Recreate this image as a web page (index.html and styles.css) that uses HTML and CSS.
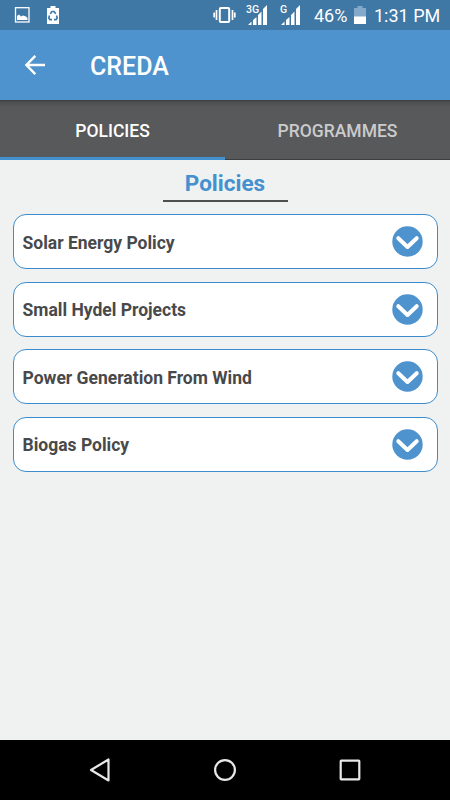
FILE: index.html
```
<!DOCTYPE html>
<html>

<head>
    <meta charset="utf-8">
    <title>CREDA - Policies</title>
    <link rel="stylesheet" href="styles.css">
    <meta name="viewport" content="width=device-width, initial-scale=1">
</head>

<body>
    <div class="status-bar">
        <svg class="icon-picture" width="16" height="30" viewBox="0 0 16 30">
            <rect x="1.500" y="7.700" width="13.500" height="14.300" fill="none" stroke="#fff" stroke-width="1.300"/>
            <path d="M3 20v-4l2-1.500 2 2 2-1 3 1 1.500 1.500v2z" fill="#fff"/>
        </svg>
        <svg class="icon-recycle" width="14" height="30" viewBox="0 0 14 30">
            <path d="M1 8h3.500V6h5v2H13v16H1z" fill="#fff"/>
            <g fill="none" stroke="#3f77a5" stroke-width="1.700">
                <path d="M4.200 13.700L6 11.500h2l1.800 2.200"/>
                <path d="M3.500 15.500L2.800 18l1.200 1.700h2"/>
                <path d="M10.500 15.500l.7 2.500-1.200 1.700H8"/>
            </g>
        </svg>
        <div class="status-right">
            <svg class="icon-vibrate" width="24" height="30" viewBox="0 0 24 30">
                <rect x="6.800" y="8" width="9.400" height="14" rx="1" fill="none" stroke="#fff" stroke-width="2"/>
                <path d="M3.500 10v10M19.500 10v10M1.200 12.500v5M21.800 12.500v5" stroke="#fff" stroke-width="1.700"/>
            </svg>
            <svg class="icon-signal" width="23" height="30" viewBox="0 0 23 30">
                <text class="network" x="0" y="13">3G</text>
                <path d="M2 25l3.500-3.500V25zM7 20l3.500-3v8H7zM12 15l3.500-3.500V25H12zM17 9l4-4v20h-4z" fill="#fff"/>
            </svg>
            <svg class="icon-signal" width="23" height="30" viewBox="0 0 23 30">
                <text class="network" x="1" y="13">G</text>
                <path d="M2 25l3.500-3.500V25zM7 20l3.500-3v8H7zM12 15l3.500-3.500V25H12zM17 9l4-4v20h-4z" fill="#fff"/>
            </svg>
            <span class="percent">46%</span>
            <svg class="icon-battery" width="14" height="30" viewBox="0 0 14 30">
                <path d="M1 8h3.500V6h5v2H13v9H1z" fill="#84a9cb"/>
                <path d="M1 16.500h12V24H1z" fill="#fff"/>
            </svg>
            <span class="time">1:31 PM</span>
        </div>
    </div>

    <div class="toolbar">
        <svg class="back" width="22" height="22" viewBox="0 0 22 22">
            <path d="M21 11H3M11.300 1.900L2.400 11l8.900 9.100" fill="none" stroke="#fff" stroke-width="2.400"/>
        </svg>
        <div class="title">CREDA</div>
    </div>

    <div class="tabs">
        <div class="tab active">POLICIES</div>
        <div class="tab">PROGRAMMES</div>
    </div>

    <div class="content">
        <div class="heading">Policies</div>
        <div class="card">
            <span>Solar Energy Policy</span>
            <svg class="arrow" viewBox="0 0 31 31"><circle cx="15.500" cy="15.500" r="15.200"/><path d="M6.300 12.200l9.200 8.800 9.200-8.800"/></svg>
        </div>
        <div class="card">
            <span>Small Hydel Projects</span>
            <svg class="arrow" viewBox="0 0 31 31"><circle cx="15.500" cy="15.500" r="15.200"/><path d="M6.300 12.200l9.200 8.800 9.200-8.800"/></svg>
        </div>
        <div class="card">
            <span>Power Generation From Wind</span>
            <svg class="arrow" viewBox="0 0 31 31"><circle cx="15.500" cy="15.500" r="15.200"/><path d="M6.300 12.200l9.200 8.800 9.200-8.800"/></svg>
        </div>
        <div class="card">
            <span>Biogas Policy</span>
            <svg class="arrow" viewBox="0 0 31 31"><circle cx="15.500" cy="15.500" r="15.200"/><path d="M6.300 12.200l9.200 8.800 9.200-8.800"/></svg>
        </div>
    </div>

    <div class="nav-bar">
        <svg width="26" height="26" viewBox="0 0 26 26"><path d="M21.500 2.500v21L4 13z"/></svg>
        <svg width="26" height="26" viewBox="0 0 26 26"><circle cx="13" cy="13" r="9.900"/></svg>
        <svg width="26" height="26" viewBox="0 0 26 26"><rect x="3.700" y="3.700" width="18.600" height="18.600" rx="0.500"/></svg>
    </div>
</body>

</html>
```

FILE: styles.css
```
* {
    box-sizing: border-box;
}

body {
    margin: 0;
    height: 800px;
    display: flex;
    flex-direction: column;
    background: #f0f2f1;
    font-family: Roboto, sans-serif;
    overflow: hidden;
}

.status-bar {
    height: 30px;
    flex: none;
    display: flex;
    align-items: center;
    padding: 0 11px 0 14px;
    background: #3f77a5;
    color: #fff;
    font-size: 18px;
    line-height: 30px;
}

.icon-recycle {
    margin-left: 16px;
}

.status-right {
    margin-left: auto;
    display: flex;
    align-items: center;
    padding-top: 1px;
}

.status-right svg {
    margin-top: -1px;
}

.icon-vibrate {
    margin-right: 9px;
}

.icon-signal {
    margin-right: 10px;
}

.icon-signal + .percent {
    margin-left: 2px;
}

.network {
    font-size: 10.5px;
    font-weight: 500;
    fill: #fff;
}

.percent {
    width: 39px;
}

.time {
    width: 65px;
    margin-left: 7px;
    white-space: nowrap;
}

.toolbar {
    height: 70px;
    flex: none;
    display: flex;
    align-items: center;
    padding-left: 24px;
    background: #4e93ce;
}

.title {
    margin: 3px 0 0 44px;
    color: #fff;
    font-size: 25px;
    font-weight: 500;
}

.tabs {
    height: 60px;
    flex: none;
    display: flex;
    background: linear-gradient(#3b3c3d, #4d4e4f 2px, #58595b 7px);
}

.tab {
    flex: 1;
    text-align: center;
    line-height: 62px;
    font-size: 17.5px;
    font-weight: 500;
    color: #cbcbcc;
    border-bottom: 1px solid #3d3e40;
}

.tab.active {
    color: #fff;
    border-bottom: 3px solid #4390cf;
}

.content {
    flex: 1;
    padding: 0 12.5px;
}

.heading {
    width: 125px;
    height: 42px;
    margin: 0 auto 12.4px;
    padding-top: 8px;
    border-bottom: 2px solid #4c4e4f;
    text-align: center;
    line-height: 30px;
    font-size: 22.5px;
    font-weight: 700;
    color: #4590cf;
}

.card {
    height: 55px;
    margin-bottom: 12.5px;
    padding: 0 14px 0 9px;
    display: flex;
    align-items: center;
    justify-content: space-between;
    border: 1px solid #3d8dcc;
    border-radius: 13px;
    background: #fff;
    color: #48494b;
    font-size: 17.5px;
    font-weight: 700;
}

.card span {
    padding-top: 2px;
}

.arrow {
    width: 31px;
    height: 31px;
}

.arrow circle {
    fill: #4e93ce;
}

.arrow path {
    fill: none;
    stroke: #fff;
    stroke-width: 4;
    stroke-linecap: round;
    stroke-linejoin: round;
}

.nav-bar {
    height: 60px;
    flex: none;
    display: flex;
    align-items: center;
    justify-content: center;
    gap: 99px;
    background: #000;
}

.nav-bar svg {
    fill: none;
    stroke: #e8e8e8;
    stroke-width: 2.2;
    stroke-linejoin: round;
}
```
